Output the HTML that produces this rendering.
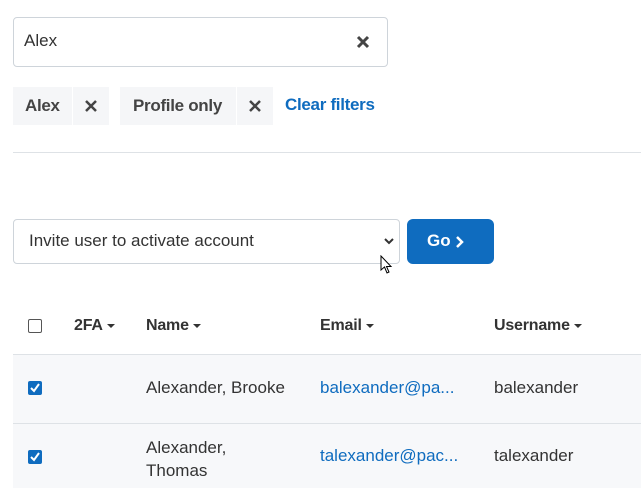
<!DOCTYPE html><html><head><style>
body{margin:0;width:641px;height:488px;overflow:hidden;background:#fff;font-family:"Liberation Sans",sans-serif;color:#333;position:relative}
.a{position:absolute}
.chip{position:absolute;top:87px;height:38px;background:#f5f6f8;font-weight:bold;font-size:17px;line-height:38px;color:#444;letter-spacing:-0.3px}
.hd{position:absolute;top:317px;font-weight:bold;font-size:16px;color:#333;letter-spacing:-0.2px}
.tri{display:inline-block;border-left:4px solid transparent;border-right:4px solid transparent;border-top:4px solid #333;vertical-align:middle;margin-left:4px}
.cb{position:absolute;left:28px;width:14px;height:14px;border-radius:2px}
.t{position:absolute;font-size:17px;letter-spacing:0;color:#333}
.l{color:#0f6cbf}
</style></head><body>
<div class="a" style="left:13px;top:17px;width:373px;height:48px;border:1px solid #ced4da;border-radius:4px"></div>
<div class="t" style="left:24px;top:31px">Alex</div>
<svg class="a" style="left:356px;top:35px" width="14" height="14"><path d="M2 2L12 12M12 2L2 12" stroke="#444" stroke-width="3"/></svg>
<div class="chip" style="left:13px;width:59px;padding-left:12px;box-sizing:border-box">Alex</div>
<div class="chip" style="left:73px;width:36px"></div>
<svg class="a" style="left:85px;top:100px" width="12" height="12"><path d="M1 1L11 11M11 1L1 11" stroke="#444" stroke-width="2.5"/></svg>
<div class="chip" style="left:120px;width:116px;padding-left:13px;box-sizing:border-box">Profile only</div>
<div class="chip" style="left:237px;width:36px"></div>
<svg class="a" style="left:249px;top:100px" width="12" height="12"><path d="M1 1L11 11M11 1L1 11" stroke="#444" stroke-width="2.5"/></svg>
<div class="a" style="left:285px;top:95px;font-weight:bold;font-size:17px;color:#0f6cbf;letter-spacing:-0.3px">Clear filters</div>
<div class="a" style="left:13px;top:152px;width:628px;height:1px;background:#dee2e6"></div>
<div class="a" style="left:13px;top:219px;width:385px;height:43px;border:1px solid #ced4da;border-radius:4px"></div>
<div class="t" style="left:29px;top:231px">Invite user to activate account</div>
<svg class="a" style="left:383px;top:237px" width="12" height="8"><path d="M2 2L6 6L10 2" stroke="#333" stroke-width="2" fill="none"/></svg>
<svg class="a" style="left:380px;top:255px" width="14" height="20"><path d="M1 1L1 15L4.5 12L7 18L9 17L6.5 11.5L11 11.5Z" fill="#fff" stroke="#000" stroke-width="1"/></svg>
<div class="a" style="left:407px;top:219px;width:87px;height:45px;background:#0f6cbf;border-radius:6px"></div>
<div class="a" style="left:427px;top:231px;color:#fff;font-weight:bold;font-size:17px">Go</div>
<svg class="a" style="left:455px;top:235px" width="10" height="14"><path d="M2 2L7 7L2 12" stroke="#fff" stroke-width="2.5" fill="none"/></svg>
<div class="cb" style="top:319px;border:1px solid #555;box-sizing:border-box"></div>
<div class="hd" style="left:74px">2FA<span class="tri"></span></div>
<div class="hd" style="left:146px">Name<span class="tri"></span></div>
<div class="hd" style="left:320px">Email<span class="tri"></span></div>
<div class="hd" style="left:494px">Username<span class="tri"></span></div>
<div class="a" style="left:13px;top:354px;width:628px;height:1px;background:#dee2e6"></div>
<div class="a" style="left:13px;top:355px;width:628px;height:68px;background:#f7f8fa"></div>
<div class="a" style="left:13px;top:423px;width:628px;height:1px;background:#dee2e6"></div>
<div class="a" style="left:13px;top:424px;width:628px;height:64px;background:#f7f8fa"></div>
<div class="cb" style="top:381px;background:#0f6cbf"></div>
<svg class="a" style="left:28px;top:381px" width="14" height="14"><path d="M3 7L6 10L11 3" stroke="#fff" stroke-width="2" fill="none"/></svg>
<div class="cb" style="top:450px;background:#0f6cbf"></div>
<svg class="a" style="left:28px;top:450px" width="14" height="14"><path d="M3 7L6 10L11 3" stroke="#fff" stroke-width="2" fill="none"/></svg>
<div class="t" style="left:146px;top:378px">Alexander, Brooke</div>
<div class="t l" style="left:320px;top:378px">balexander@pa...</div>
<div class="t" style="left:494px;top:378px">balexander</div>
<div class="t" style="left:146px;top:436px;line-height:23px">Alexander,<br>Thomas</div>
<div class="t l" style="left:320px;top:446px">talexander@pac...</div>
<div class="t" style="left:494px;top:446px">talexander</div>
</body></html>
